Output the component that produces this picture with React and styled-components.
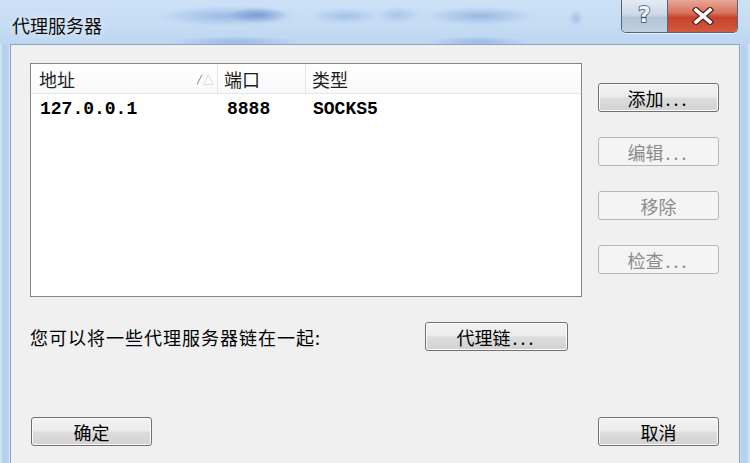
import React from 'react';
import styled, { createGlobalStyle } from 'styled-components';

const GlobalStyle = createGlobalStyle`
  html, body {
    margin: 0;
    padding: 0;
  }
  body {
    width: 750px;
    height: 463px;
    overflow: hidden;
    font-family: "Noto Sans CJK SC", "Noto Sans", sans-serif;
  }
`;

const Window = styled.div`
  width: 750px;
  height: 463px;
  display: flex;
  flex-direction: column;
  background: linear-gradient(to right, #dce9f7 0px, #b4cfee 3px, #b9d3f0 8px, #d2e3f6 10px,
    #bcd5f0 12px, #bcd5f0 738px, #d0e2f6 740px, #b6d0ee 742px, #b9d3f0 747px, #dce9f7 750px);
`;

const TitleBar = styled.div`
  height: 44px;
  flex: 0 0 44px;
  display: flex;
  justify-content: space-between;
  align-items: flex-start;
  padding: 0 12px;
  box-sizing: border-box;
  background:
    radial-gradient(ellipse 30px 8px at 258px 15px, rgba(60, 100, 185, 0.45), transparent),
    radial-gradient(ellipse 70px 10px at 228px 16px, rgba(100, 140, 210, 0.45), transparent),
    radial-gradient(ellipse 35px 8px at 345px 16px, rgba(110, 150, 215, 0.4), transparent),
    radial-gradient(ellipse 55px 9px at 480px 16px, rgba(100, 140, 210, 0.45), transparent),
    radial-gradient(ellipse 22px 8px at 398px 15px, rgba(110, 150, 215, 0.35), transparent),
    radial-gradient(ellipse 7px 8px at 576px 18px, rgba(110, 150, 215, 0.4), transparent),
    radial-gradient(ellipse 65px 6px at 235px 42px, rgba(100, 140, 210, 0.4), transparent),
    radial-gradient(ellipse 50px 6px at 478px 42px, rgba(100, 140, 210, 0.4), transparent),
    linear-gradient(to bottom, #cde1f6 0%, #c4dbf3 60%, #bed6f1 100%);
`;

const Title = styled.div`
  padding-top: 15px;
  font-size: 18px;
  line-height: 20px;
  color: #0b0b0b;
  text-shadow: 0 0 8px rgba(255, 255, 255, 0.9);
`;

const CaptionButtons = styled.div`
  display: flex;
  height: 32px;
  border: 1px solid #55657a;
  border-top: none;
  border-radius: 0 0 5px 5px;
  overflow: hidden;
  box-shadow: 0 1px 0 rgba(255, 255, 255, 0.6);
`;

const CaptionButton = styled.div`
  width: ${p => p.$w}px;
  display: flex;
  align-items: center;
  justify-content: center;
  background: ${p => p.$close
    ? 'linear-gradient(to bottom, #e9a896 0%, #d7735d 40%, #c7422b 55%, #d35a40 100%)'
    : 'linear-gradient(to bottom, #e3eaf2 0%, #cdd9e6 45%, #b3c3d6 55%, #c1d0e0 100%)'};
  & + & {
    border-left: 1px solid #55657a;
  }
`;

const HelpGlyph = styled.span`
  font-family: "DejaVu Sans", sans-serif;
  font-weight: bold;
  font-size: 22px;
  line-height: 22px;
  color: #eef3f9;
  -webkit-text-stroke: 1.5px #3e4e63;
  paint-order: stroke fill;
  margin-top: -2px;
`;

const Client = styled.div`
  flex: 1;
  margin: 0 10px;
  background: #f0f0f0;
  border: 1px solid #8ea2bb;
  border-bottom: none;
  padding: 18px 20px 17px 19px;
  display: flex;
  flex-direction: column;
`;

const TopRow = styled.div`
  display: flex;
  gap: 16px;
`;

const List = styled.div`
  width: 552px;
  height: 234px;
  box-sizing: border-box;
  border: 1px solid #828790;
  background: #fff;
`;

const HeaderRow = styled.div`
  display: grid;
  grid-template-columns: 187px 88px 1fr;
  height: 29px;
  border-bottom: 1px solid #e5e5e5;
  background: linear-gradient(to bottom, #ffffff 0%, #f8f9fa 100%);
`;

const HeaderCell = styled.div`
  display: flex;
  align-items: center;
  justify-content: space-between;
  padding-left: ${p => p.$pad}px;
  padding-right: 3px;
  font-size: 18px;
  color: #1e1e1e;
  border-right: 1px solid #e5e5e5;
  &:last-child {
    border-right: none;
  }
`;

const DataRow = styled.div`
  display: grid;
  grid-template-columns: 187px 88px 1fr;
  height: 30px;
  align-items: center;
`;

const DataCell = styled.div`
  padding-left: ${p => p.$pad}px;
  font-family: "Liberation Mono", monospace;
  font-weight: bold;
  font-size: 18px;
  color: #000;
`;

const SideButtons = styled.div`
  display: flex;
  flex-direction: column;
  gap: 25px;
  padding-top: 20px;
`;

const Button = styled.button`
  width: ${p => p.$w || 121}px;
  height: 29px;
  padding: 0;
  box-sizing: border-box;
  border: 1px solid #707070;
  border-radius: 3px;
  background: linear-gradient(to bottom, #f3f3f3 0%, #ebebeb 48%, #dddddd 52%, #d2d2d2 100%);
  box-shadow: inset 0 0 0 1px #fbfbfb;
  font-family: "Noto Sans CJK SC", sans-serif;
  font-size: 18px;
  line-height: 20px;
  color: #000;
  &:disabled {
    border-color: #b5b8ba;
    background: #f4f4f4;
    box-shadow: none;
    color: #8c8c8c;
  }
`;

const Dots = styled.span`
  letter-spacing: 3px;
  margin-left: 2px;
`;

const ChainRow = styled.div`
  display: flex;
  align-items: center;
  margin-top: 25px;
`;

const ChainLabel = styled.div`
  flex: 0 0 395px;
  font-size: 18px;
  letter-spacing: 1px;
  color: #000;
`;

const BottomRow = styled.div`
  margin-top: auto;
  display: flex;
  justify-content: space-between;
  padding-left: 1px;
`;

function SortArrow() {
  return (
    <svg width="18" height="12" viewBox="0 0 18 12">
      <path d="M7.5 11.5 L12.5 1.5 L17.5 11.5 Z" fill="none" stroke="#dcdcdc" strokeWidth="1" />
      <line x1="1" y1="11.5" x2="6" y2="1.5" stroke="#8a8a8a" strokeWidth="1" />
    </svg>
  );
}

function CloseX() {
  return (
    <svg width="22" height="18" viewBox="0 0 22 18">
      <g strokeLinecap="square">
        <line x1="4" y1="3" x2="18" y2="15" stroke="#4a2218" strokeWidth="6" />
        <line x1="18" y1="3" x2="4" y2="15" stroke="#4a2218" strokeWidth="6" />
        <line x1="4" y1="3" x2="18" y2="15" stroke="#ffffff" strokeWidth="3.6" />
        <line x1="18" y1="3" x2="4" y2="15" stroke="#ffffff" strokeWidth="3.6" />
      </g>
    </svg>
  );
}

const proxies = [{ host: '127.0.0.1', port: '8888', type: 'SOCKS5' }];

export default function App() {
  return (
    <>
      <GlobalStyle />
      <Window>
        <TitleBar>
          <Title>代理服务器</Title>
          <CaptionButtons>
            <CaptionButton $w={45}><HelpGlyph>?</HelpGlyph></CaptionButton>
            <CaptionButton $w={69} $close><CloseX /></CaptionButton>
          </CaptionButtons>
        </TitleBar>
        <Client>
          <TopRow>
            <List>
              <HeaderRow>
                <HeaderCell $pad={8}>地址<SortArrow /></HeaderCell>
                <HeaderCell $pad={6}>端口</HeaderCell>
                <HeaderCell $pad={6}>类型</HeaderCell>
              </HeaderRow>
              {proxies.map(p => (
                <DataRow key={p.host + p.port}>
                  <DataCell $pad={9}>{p.host}</DataCell>
                  <DataCell $pad={9}>{p.port}</DataCell>
                  <DataCell $pad={7}>{p.type}</DataCell>
                </DataRow>
              ))}
            </List>
            <SideButtons>
              <Button>添加<Dots>...</Dots></Button>
              <Button disabled>编辑<Dots>...</Dots></Button>
              <Button disabled>移除</Button>
              <Button disabled>检查<Dots>...</Dots></Button>
            </SideButtons>
          </TopRow>
          <ChainRow>
            <ChainLabel>您可以将一些代理服务器链在一起:</ChainLabel>
            <Button $w={143}>代理链<Dots>...</Dots></Button>
          </ChainRow>
          <BottomRow>
            <Button>确定</Button>
            <Button>取消</Button>
          </BottomRow>
        </Client>
      </Window>
    </>
  );
}
